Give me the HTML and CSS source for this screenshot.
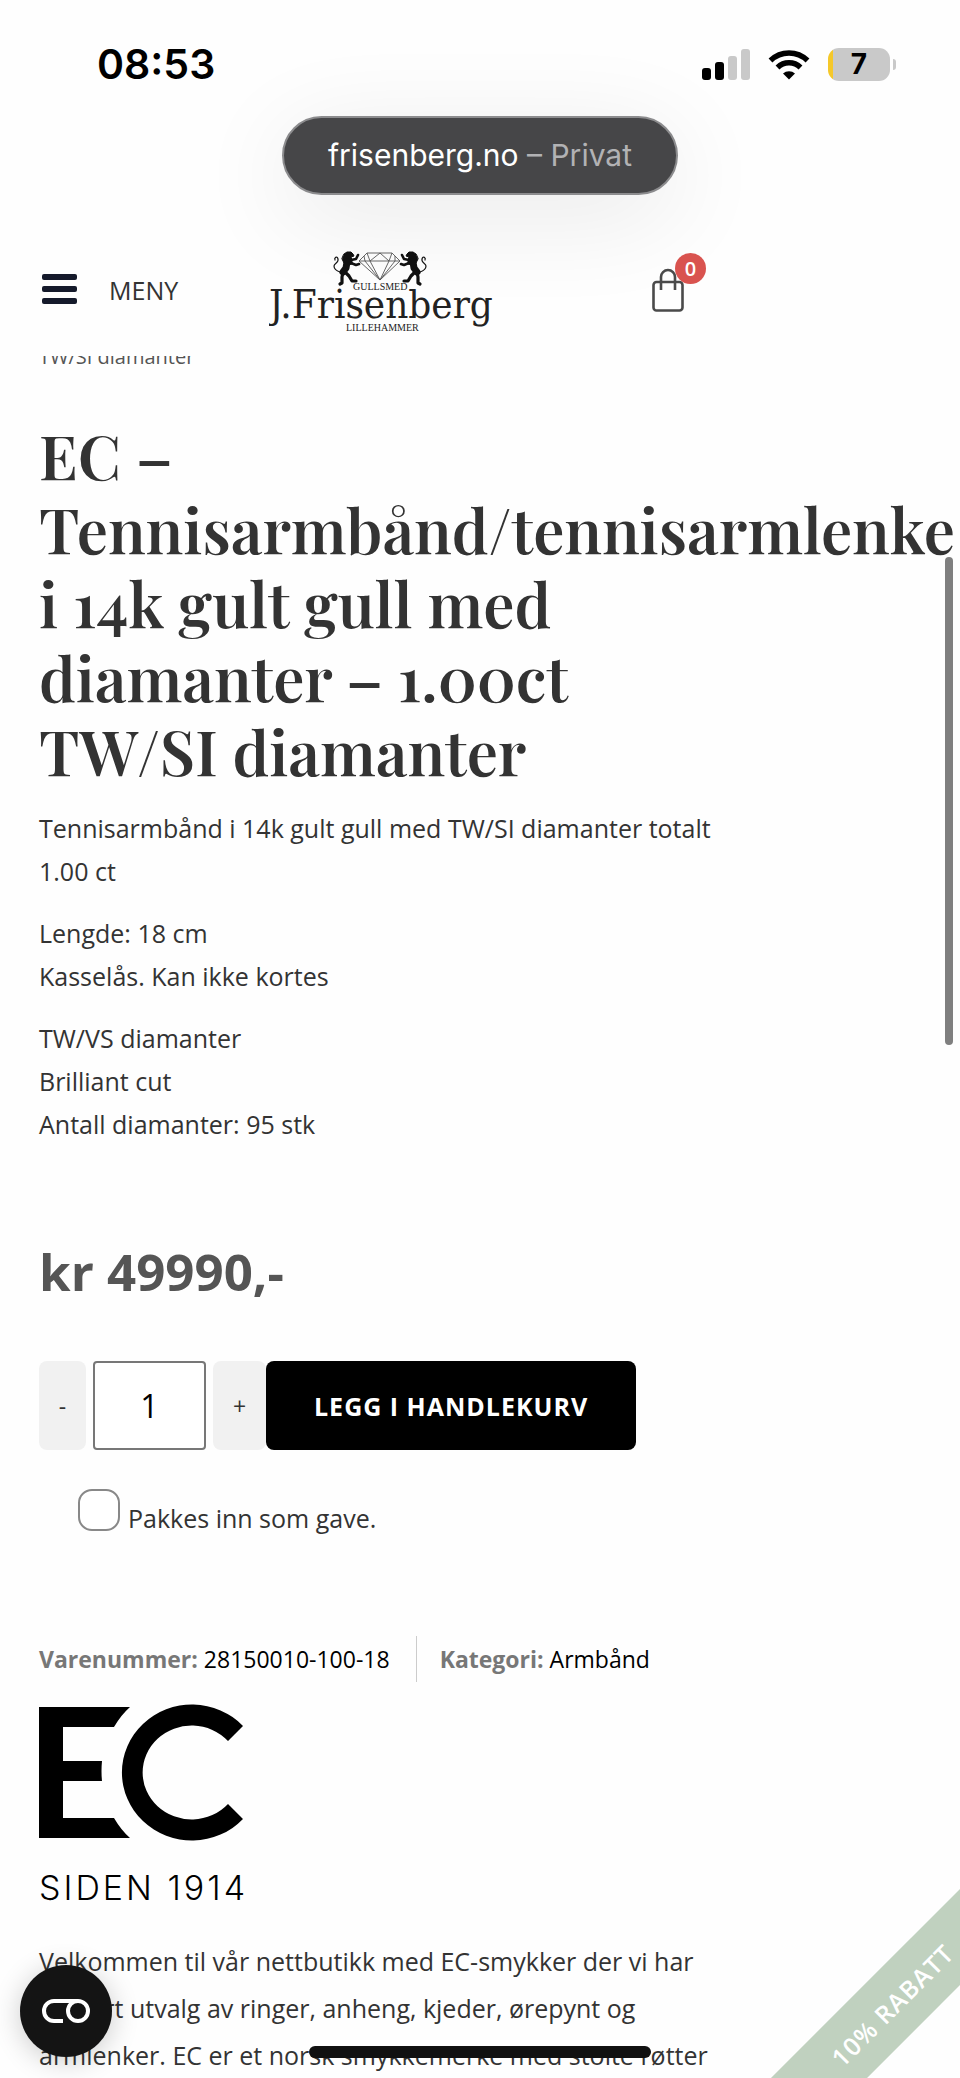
FILE: index.html
```
<!DOCTYPE html>
<html lang="nb">
<head>
  <meta charset="UTF-8">
  <meta name="viewport" content="width=device-width, initial-scale=1.0">
  <title>EC – Tennisarmbånd | J.Frisenberg</title>
  <link rel="stylesheet" href="styles.css">
</head>
<body>
<div class="screen">

  <div class="status-bar">
    <span class="clock">08:53</span>
    <div class="status-icons">
      <svg width="48" height="31" viewBox="0 0 48 31">
        <rect x="0" y="19" width="9" height="12" rx="3"/>
        <rect x="13" y="13" width="9" height="18" rx="3"/>
        <rect x="26" y="7" width="9" height="24" rx="3" fill="#c9c9c9"/>
        <rect x="39" y="0" width="9" height="31" rx="3" fill="#c9c9c9"/>
      </svg>
      <svg width="42" height="31" viewBox="0 0 42 31">
        <path d="M2.500 11.500a26.500 26.500 0 0 1 37 0" fill="none" stroke="#000" stroke-width="5.500"/>
        <path d="M9.500 18.500a16.500 16.500 0 0 1 23 0" fill="none" stroke="#000" stroke-width="5.500"/>
        <path d="M15 24.500a8.800 8.800 0 0 1 12 0L21 30.500z"/>
      </svg>
      <div class="battery">7</div>
    </div>
  </div>

  <div class="address-pill">frisenberg.no <span>– Privat</span></div>

  <header class="site-header">
    <button class="menu-btn" type="button">
      <svg width="35" height="31" viewBox="0 0 35 31" fill="#151a2b">
        <rect y="0" width="35" height="6" rx="2"/>
        <rect y="12" width="35" height="6" rx="2"/>
        <rect y="24" width="35" height="6" rx="2"/>
      </svg>
      <span>MENY</span>
    </button>
    <a class="logo" href="#" aria-label="J.Frisenberg">
      <svg width="226" height="84" viewBox="0 -2 226 84">
        <defs>
          <g id="lion" fill="#111" stroke="#111" stroke-linecap="round" stroke-linejoin="round">
            <path d="M72 4l3-2 4 0 2 2 1 2-3 1 1 3 0 4-4 1-4-2-2-4z" stroke-width="1"/>
            <path d="M79 10l5-1 2-4M79 13l5 2 3-1" fill="none" stroke-width="2.600"/>
            <path d="M75 12l-1 6-3 4" fill="none" stroke-width="7"/>
            <path d="M71 22l-1 5 0 6-2 1M73 22l4 4 3 5 4 0" fill="none" stroke-width="3.200"/>
            <path d="M68 22c-3-1-6-3-6-6s5-3 4-7-4-1-3 1" fill="none" stroke-width="1.200"/>
          </g>
        </defs>
        <use href="#lion" transform="translate(3 0)"/>
        <use href="#lion" transform="translate(219 0) scale(-1 1)"/>
        <path d="M90 11l8-8h25l8 8-20 19zM90 11h41M98 3l3 8 10-8 9 8 3-8M101 11l10 19 9-19M95 6l1 5 15 19 15-19 0-5" fill="none" stroke="#555" stroke-width="0.900"/>
        <text x="84" y="40" font-size="10">GULLSMED</text>
        <text class="logo-name" x="0" y="68" font-size="40">J.Frisenberg</text>
        <text x="77" y="81" font-size="10">LILLEHAMMER</text>
      </svg>
    </a>
    <a class="cart" href="#" aria-label="Handlekurv">
      <svg width="32" height="44" viewBox="0 0 32 44" fill="none" stroke="#4a4a4a" stroke-width="2.600">
        <rect x="1.500" y="14" width="29" height="28.500" rx="3"/>
        <path d="M9 22V9a7 7 0 0 1 14 0v13"/>
      </svg>
      <span class="cart-count">0</span>
    </a>
  </header>

  <main class="product">
    <div class="breadcrumb"><span>TW/SI diamanter</span></div>

    <h1>EC – Tennisarmbånd/tennisarmlenke i 14k gult gull med diamanter – 1.00ct TW/SI diamanter</h1>

    <div class="short-description">
      <p>Tennisarmbånd i 14k gult gull med TW/SI diamanter totalt 1.00 ct</p>
      <p>Lengde: 18 cm<br>Kasselås. Kan ikke kortes</p>
      <p>TW/VS diamanter<br>Brilliant cut<br>Antall diamanter: 95 stk</p>
    </div>

    <p class="price">kr 49990,-</p>

    <form class="cart-form">
      <div class="buy-row">
        <button class="qty-btn" type="button">-</button>
        <input class="qty" type="text" value="1" aria-label="Antall">
        <button class="qty-btn plus" type="button">+</button>
        <button class="add-btn" type="button">LEGG I HANDLEKURV</button>
      </div>
      <div class="gift">
        <input type="checkbox" id="gift">
        <label for="gift">Pakkes inn som gave.</label>
      </div>
    </form>

    <div class="meta">
      <span><b>Varenummer:</b> 28150010-100-18</span>
      <span class="category"><b>Kategori:</b> <a href="#">Armbånd</a></span>
    </div>

    <div class="brand">
      <svg width="205" height="137" viewBox="0 0 205 137">
        <path d="M0 3h91q-9 8-16 20H24v34h39q-1 10 0 20H24v37h51q7 12 16 20H0z"/>
        <path d="M204 22A70 68 0 1 0 204 115L189 100A49 47 0 1 1 189 37z"/>
      </svg>
      <p>SIDEN 1914</p>
    </div>

    <p class="welcome">Velkommen til vår nettbutikk med EC-smykker der vi har et stort utvalg av ringer, anheng, kjeder, ørepynt og armlenker. EC er et norsk smykkemerke med stolte røtter</p>
  </main>

  <div class="scrollbar"></div>
  <div class="ribbon">10% RABATT</div>
  <button class="consent-btn" type="button" aria-label="Samtykke">
    <svg width="48" height="24" viewBox="0 0 48 24" fill="none" stroke="#fff" stroke-width="4">
      <path d="M21 22h-9a10 10 0 0 1 0-20h24"/>
      <circle cx="36" cy="12" r="10"/>
    </svg>
  </button>
  <div class="home-indicator"></div>

</div>
</body>
</html>
```
FILE: styles.css
```
* { box-sizing: border-box; margin: 0; padding: 0; }

body {
  font-family: "Open Sans", "Noto Sans", sans-serif;
  font-size: 25px;
  background: #fefefe;
  color: #333;
}

button, input { font: inherit; color: inherit; }
button { border: none; cursor: pointer; }
a { color: inherit; text-decoration: none; }

.screen {
  position: relative;
  height: 100vh;
  overflow: hidden;
}

/* phone chrome */
.status-bar {
  display: flex;
  justify-content: space-between;
  align-items: center;
  height: 116px;
  padding: 12px 64px 0 97px;
  font-family: Inter, sans-serif;
  color: #000;
}

.clock {
  font-size: 41px;
  font-weight: 600;
}

.status-icons {
  display: flex;
  align-items: center;
  gap: 18px;
}

.battery {
  position: relative;
  width: 62px;
  height: 33px;
  margin-right: 6px;
  border-radius: 11px;
  background: linear-gradient(90deg, #f5c82a 5px, #c9c9c9 5px);
  font-size: 28px;
  font-weight: 700;
  line-height: 33px;
  text-align: center;
}

.battery::after {
  content: "";
  position: absolute;
  right: -6px;
  top: 11px;
  width: 3px;
  height: 11px;
  border-radius: 0 3px 3px 0;
  background: #c9c9c9;
}

.address-pill {
  width: fit-content;
  height: 79px;
  margin: 0 auto;
  padding: 0 44px;
  border: 2px solid #8c8c8e;
  border-radius: 40px;
  background: #464648;
  box-shadow: 0 20px 100px rgba(0, 0, 0, 0.09);
  font-family: Inter, sans-serif;
  font-size: 30px;
  line-height: 75px;
  color: #fff;
}

.address-pill span { color: #b2b2b4; }

.site-header {
  display: flex;
  align-items: center;
  height: 161px;
  padding: 28px 39px 0 42px;
}

.menu-btn {
  display: flex;
  align-items: center;
  gap: 32px;
  width: 227px;
  background: none;
}

.logo svg { display: block; }

.logo text {
  font-family: "Liberation Serif", serif;
  fill: #222;
}

.logo .logo-name { font-family: "DejaVu Serif Condensed", "DejaVu Serif", serif; }

.cart {
  position: relative;
  display: flex;
  margin-left: 157px;
}

.cart-count {
  position: absolute;
  left: 23px;
  top: -15px;
  width: 31px;
  height: 31px;
  border-radius: 50%;
  background: #d9534f;
  color: #fff;
  font-size: 20px;
  font-weight: 600;
  line-height: 31px;
  text-align: center;
}

/* product */
.product {
  width: 75%;
  padding-left: 39px;
}

.breadcrumb {
  display: flex;
  align-items: flex-end;
  height: 16px;
  overflow: hidden;
  font-size: 20px;
  line-height: 30px;
  color: #555;
}

h1 {
  margin-top: 46px;
  font-family: "Playfair Display", "Liberation Serif", serif;
  font-size: 62px;
  font-weight: 600;
  line-height: 74px;
}

.short-description {
  margin-top: 19px;
  line-height: 43px;
}

.short-description p { margin-bottom: 19px; }

.price {
  margin-top: 88px;
  font-size: 51px;
  font-weight: 700;
  line-height: 74px;
  color: #555;
}

.buy-row {
  display: flex;
  height: 89px;
  margin-top: 53px;
}

.qty-btn {
  width: 47px;
  border-radius: 8px;
  background: #f1f1f1;
  font-size: 23px;
}

.qty-btn.plus { width: 53px; }

.qty {
  width: 113px;
  margin: 0 7px;
  border: 2px solid #777;
  border-radius: 4px;
  background: #fff;
  color: #000;
  font-size: 32px;
  text-align: center;
}

.add-btn {
  padding: 0 48px;
  border-radius: 8px;
  background: #000;
  color: #fff;
  font-weight: 700;
  letter-spacing: 1px;
}

.gift {
  display: flex;
  align-items: center;
  gap: 8px;
  margin: 34px 0 0 39px;
}

.gift input {
  appearance: none;
  width: 42px;
  height: 42px;
  border: 2px solid #888;
  border-radius: 14px;
  background: #fff;
}

.gift label {
  padding-top: 16px;
  line-height: 36px;
}

.meta {
  display: flex;
  margin-top: 100px;
  font-size: 23px;
  line-height: 46px;
  color: #000;
}

.meta b { color: #777; }

.category {
  margin-left: 26px;
  padding-left: 23px;
  border-left: 1px solid #ccc;
}

.brand {
  margin-top: 22px;
  color: #000;
}

.brand svg { display: block; }

.brand p {
  margin-top: 24px;
  font-family: Inter, sans-serif;
  font-size: 34px;
  font-weight: 300;
  line-height: 46px;
  letter-spacing: 3px;
}

.welcome {
  margin-top: 27px;
  line-height: 47px;
}

/* overlays */
.scrollbar {
  position: absolute;
  top: 557px;
  right: 7px;
  width: 8px;
  height: 488px;
  border-radius: 4px;
  background: #7f7f7f;
}

.ribbon {
  position: absolute;
  right: -82px;
  bottom: 39px;
  width: 300px;
  height: 68px;
  background: #c0d1bf;
  color: #fff;
  font-weight: 600;
  letter-spacing: 1px;
  line-height: 68px;
  text-align: center;
  transform: rotate(-45deg);
}

.consent-btn {
  position: absolute;
  left: 20px;
  bottom: 21px;
  display: flex;
  align-items: center;
  justify-content: center;
  width: 92px;
  height: 92px;
  border-radius: 50%;
  background: #141414;
  box-shadow: 0 4px 28px rgba(0, 0, 0, 0.2);
}

.home-indicator {
  position: absolute;
  left: 50%;
  bottom: 20px;
  width: 342px;
  height: 12px;
  margin-left: -171px;
  border-radius: 6px;
  background: #111;
}
```
